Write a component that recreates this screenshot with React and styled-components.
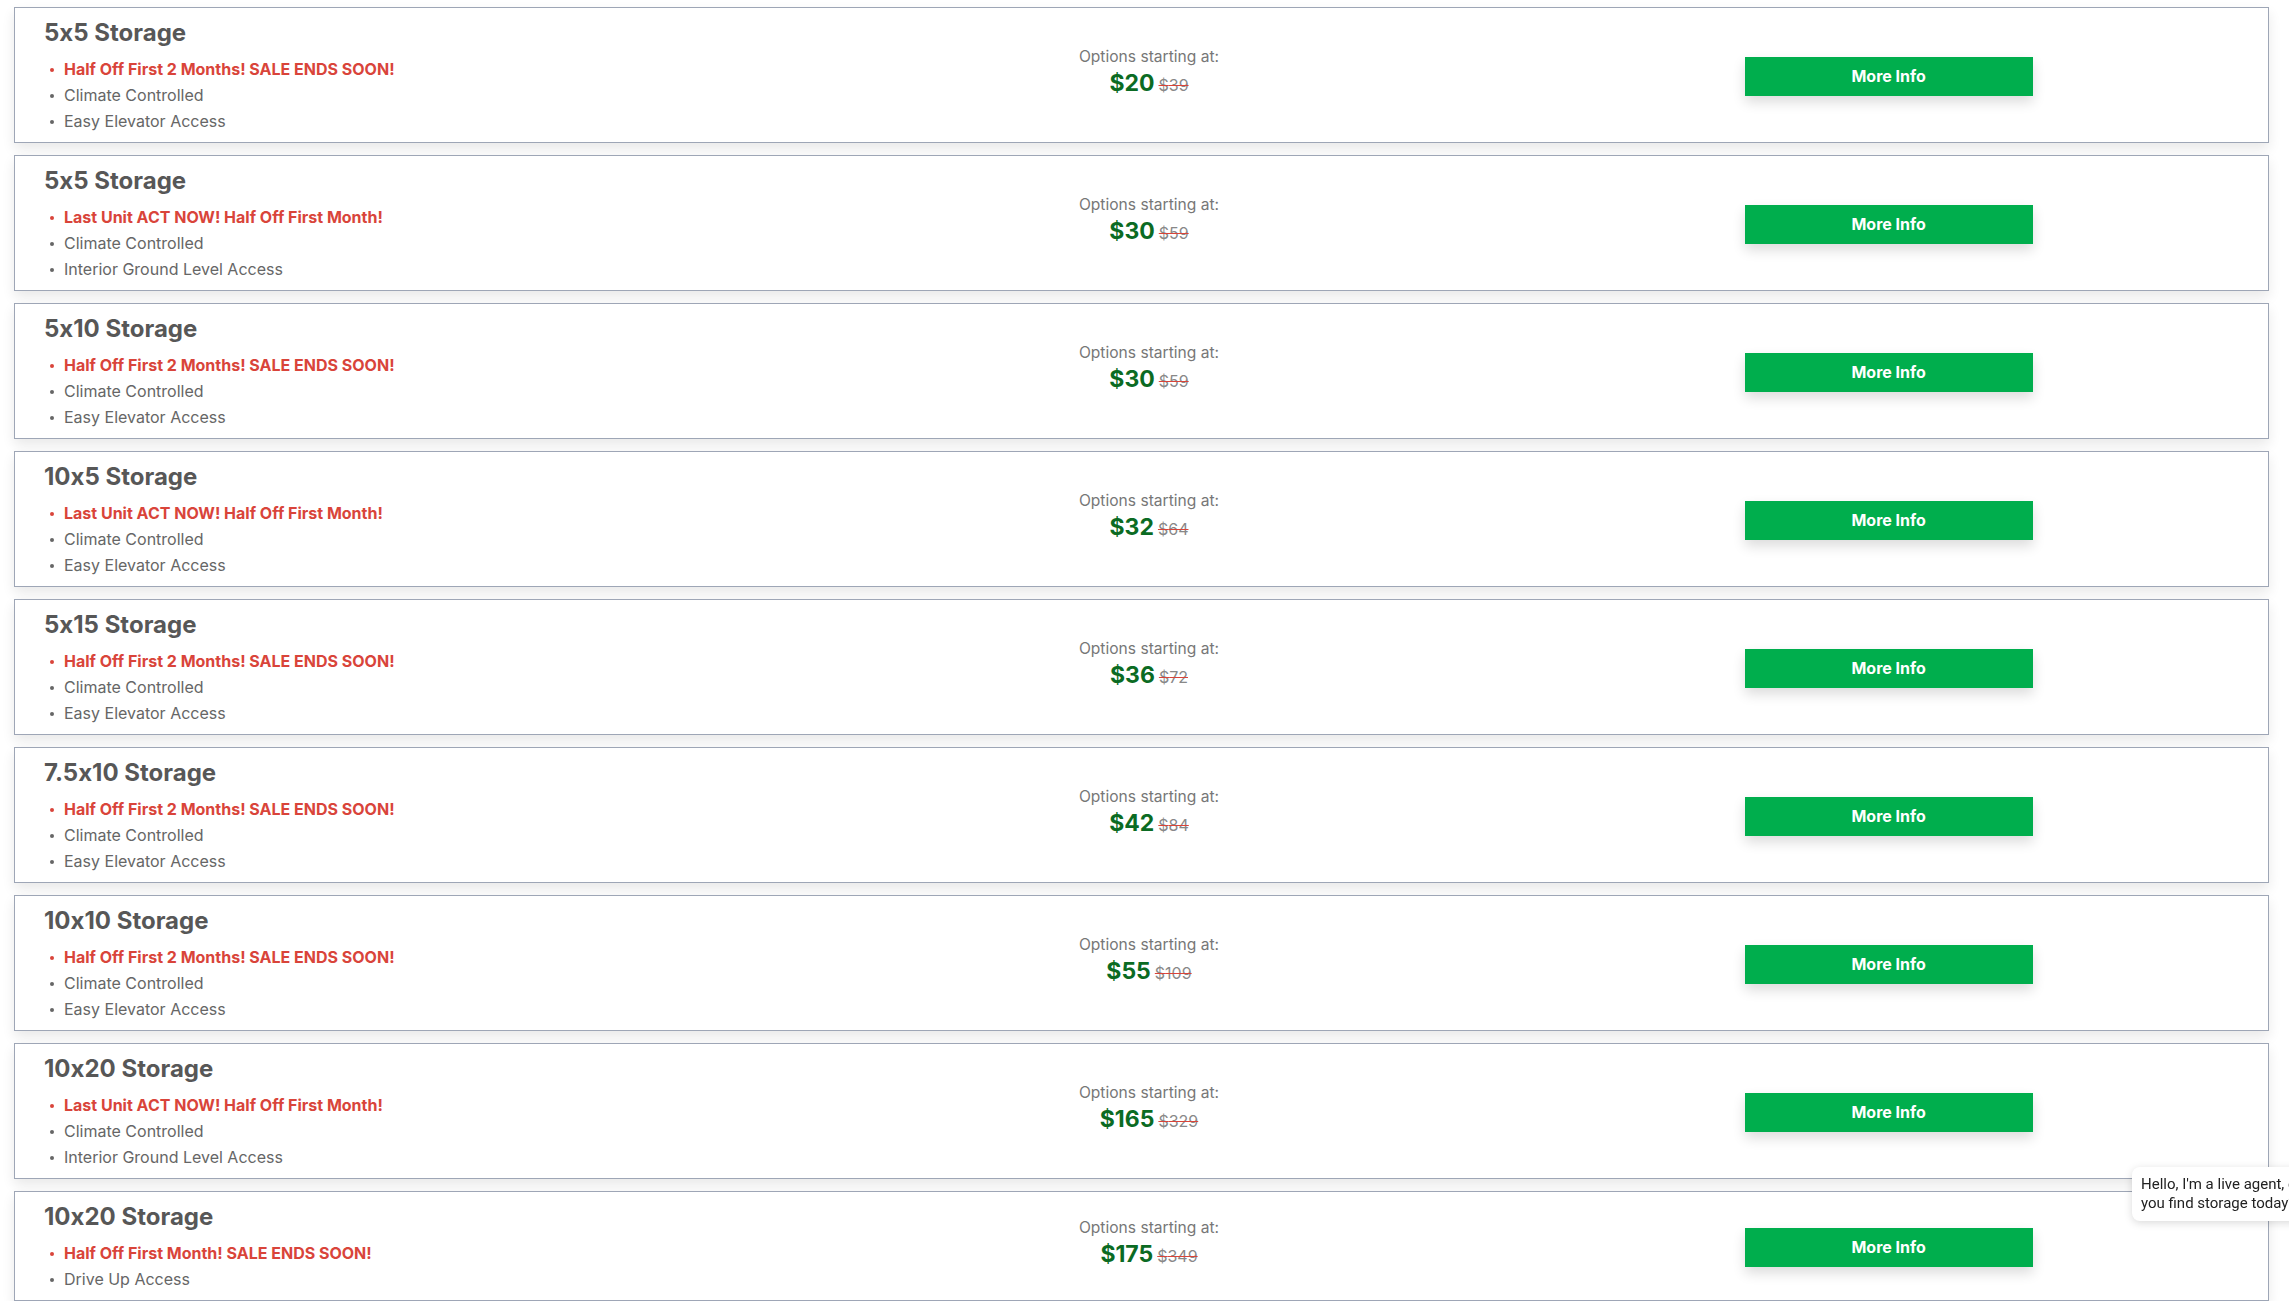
import React from "react";
import styled, { createGlobalStyle } from "styled-components";

const Global = createGlobalStyle`
  html, body { margin: 0; padding: 0; background: #ffffff; overflow: hidden; }
  body {
    font-family: Inter, "Noto Sans", Arial, sans-serif;
    font-feature-settings: "calt" 0;
  }
  * { box-sizing: border-box; }
`;

const Page = styled.div`
  display: flex;
  flex-direction: column;
  gap: 12px;
  padding: 7px 20px 0 14px;
`;

const Card = styled.div`
  display: grid;
  grid-template-columns: 708fr 786fr 698fr;
  align-items: center;
  background: #fff;
  border: 1px solid #9ea6b6;
  box-shadow: 0 6px 12px rgba(0, 0, 0, 0.09);
  padding: 10px 30px 8px 29px;
`;

const Info = styled.div`
  display: flex;
  flex-direction: column;
  gap: 9px;
`;

const Title = styled.h3`
  margin: 0;
  font-size: 24px;
  line-height: 29px;
  font-weight: 700;
  color: #575757;
`;

const Features = styled.ul`
  list-style: none;
  margin: 0;
  padding: 0;
`;

const Feature = styled.li`
  position: relative;
  padding-left: 20px;
  font-size: 16px;
  line-height: 26px;
  font-weight: ${(p) => (p.$promo ? 700 : 400)};
  color: ${(p) => (p.$promo ? "#d9443a" : "#666666")};
  &::before {
    content: "";
    position: absolute;
    left: 6px;
    top: 12px;
    width: 4px;
    height: 4px;
    border-radius: 50%;
    background: currentColor;
  }
`;

const PriceBlock = styled.div`
  display: flex;
  flex-direction: column;
  align-items: center;
  padding-bottom: 10px;
  padding-left: 6px;
`;

const Label = styled.div`
  font-size: 15.6px;
  line-height: 24px;
  color: #777777;
`;

const PriceLine = styled.div`
  display: flex;
  align-items: baseline;
  gap: 4px;
`;

const Price = styled.span`
  font-size: 23px;
  line-height: 29px;
  font-weight: 700;
  color: #0b6b23;
`;

const OldPrice = styled.span`
  font-size: 16px;
  color: #888888;
  text-decoration: line-through;
  text-decoration-color: #d9443a;
`;

const Action = styled.div`
  display: flex;
  justify-content: center;
`;

const Button = styled.button`
  width: 288px;
  height: 39px;
  border: none;
  border-radius: 0;
  background: #00ae4d;
  color: #ffffff;
  font-family: Inter, "Noto Sans", Arial, sans-serif;
  font-feature-settings: "calt" 0;
  font-size: 16px;
  font-weight: 700;
  box-shadow: 0 6px 12px rgba(0, 0, 0, 0.14);
  cursor: pointer;
`;

const ChatBubble = styled.div`
  position: fixed;
  left: 2132px;
  top: 1167px;
  background: #ffffff;
  border-radius: 8px;
  box-shadow: 0 2px 8px rgba(0, 0, 0, 0.15);
  padding: 8px 9px;
  font-family: Roboto, Arial, sans-serif;
  font-size: 15px;
  line-height: 19px;
  color: #222222;
  white-space: nowrap;
`;

const units = [
  { size: "5x5", promo: "Half Off First 2 Months! SALE ENDS SOON!", features: ["Climate Controlled", "Easy Elevator Access"], price: 20, old: 39 },
  { size: "5x5", promo: "Last Unit ACT NOW! Half Off First Month!", features: ["Climate Controlled", "Interior Ground Level Access"], price: 30, old: 59 },
  { size: "5x10", promo: "Half Off First 2 Months! SALE ENDS SOON!", features: ["Climate Controlled", "Easy Elevator Access"], price: 30, old: 59 },
  { size: "10x5", promo: "Last Unit ACT NOW! Half Off First Month!", features: ["Climate Controlled", "Easy Elevator Access"], price: 32, old: 64 },
  { size: "5x15", promo: "Half Off First 2 Months! SALE ENDS SOON!", features: ["Climate Controlled", "Easy Elevator Access"], price: 36, old: 72 },
  { size: "7.5x10", promo: "Half Off First 2 Months! SALE ENDS SOON!", features: ["Climate Controlled", "Easy Elevator Access"], price: 42, old: 84 },
  { size: "10x10", promo: "Half Off First 2 Months! SALE ENDS SOON!", features: ["Climate Controlled", "Easy Elevator Access"], price: 55, old: 109 },
  { size: "10x20", promo: "Last Unit ACT NOW! Half Off First Month!", features: ["Climate Controlled", "Interior Ground Level Access"], price: 165, old: 329 },
  { size: "10x20", promo: "Half Off First Month! SALE ENDS SOON!", features: ["Drive Up Access"], price: 175, old: 349 },
];

export default function App() {
  return (
    <>
      <Global />
      <Page>
        {units.map((u, i) => (
          <Card key={i}>
            <Info>
              <Title>{u.size} Storage</Title>
              <Features>
                <Feature $promo>{u.promo}</Feature>
                {u.features.map((f) => (
                  <Feature key={f}>{f}</Feature>
                ))}
              </Features>
            </Info>
            <PriceBlock>
              <Label>Options starting at:</Label>
              <PriceLine>
                <Price>${u.price}</Price>
                <OldPrice>${u.old}</OldPrice>
              </PriceLine>
            </PriceBlock>
            <Action>
              <Button>More Info</Button>
            </Action>
          </Card>
        ))}
      </Page>
      <ChatBubble>
        Hello, I'm a live agent, can I help
        <br />
        you find storage today?
      </ChatBubble>
    </>
  );
}
